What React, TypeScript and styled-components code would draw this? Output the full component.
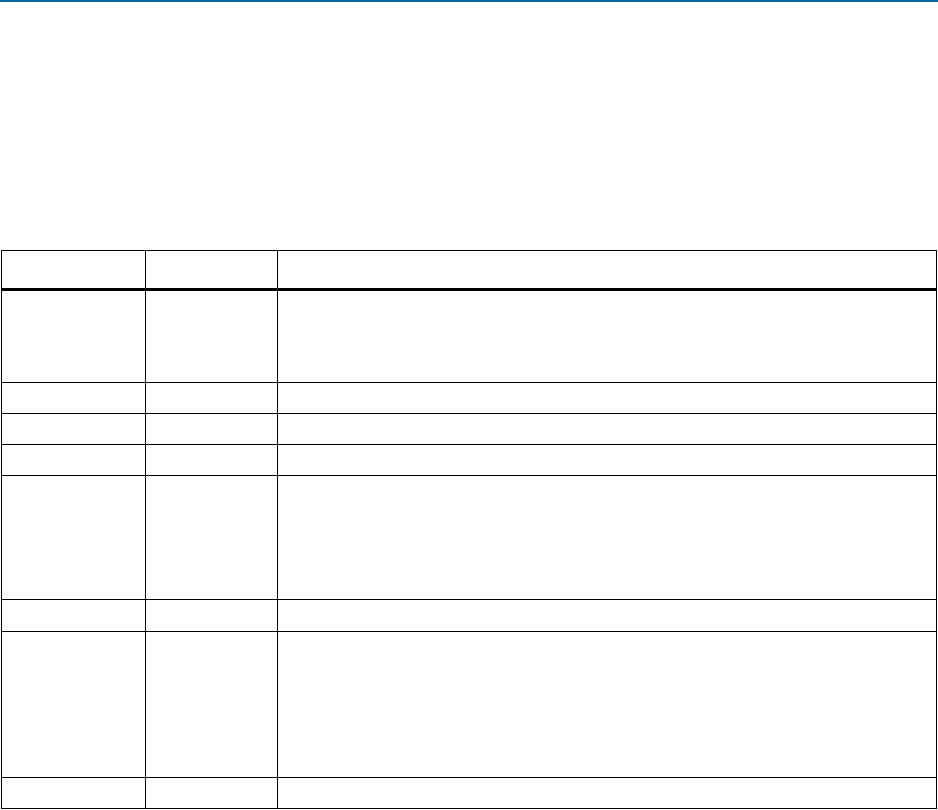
import React from 'react';
import styled, { createGlobalStyle } from 'styled-components';

const GlobalStyle = createGlobalStyle`
    html, body {
        margin: 0;
        padding: 0;
        background: #ffffff;
        font-family: "Liberation Sans", Arial, sans-serif;
        font-size: 13px;
        color: #000000;
    }
`;

const rowHeights = [92, 31, 31, 31, 124, 32, 146, 31];

const App = () => {
    return (
        <Page>
            <GlobalStyle />
            <TopRule />
            <TableArea>
                <Grid>
                    <thead>
                        <tr>
                            <HeadCell first width={145}></HeadCell>
                            <HeadCell width={132}></HeadCell>
                            <HeadCell width={659}></HeadCell>
                        </tr>
                    </thead>
                    <tbody>
                        {rowHeights.map((h, idx) => {
                            return (
                                <tr key={idx}>
                                    <Cell first height={h}></Cell>
                                    <Cell height={h}></Cell>
                                    <Cell height={h}></Cell>
                                </tr>
                            );
                        })}
                    </tbody>
                </Grid>
            </TableArea>
        </Page>
    );
}

const Page = styled.div`
    width: 938px;
    min-height: 810px;
    display: flex;
    flex-direction: column;
`;

const TopRule = styled.div`
    height: 2px;
    width: 100%;
    background-color: #05679b;
`;

const TableArea = styled.div`
    padding: 248px 0 0 1px;
`;

const Grid = styled.table`
    border-collapse: separate;
    border-spacing: 0;
    table-layout: fixed;
    width: 936px;
`;

const HeadCell = styled.th<{first?: boolean, width: number}>`
    box-sizing: border-box;
    width: ${props => props.width}px;
    height: 41px;
    padding: 0 6px;
    border-top: 1px solid #000;
    border-bottom: 3px solid #000;
    border-right: 1px solid #000;
    border-left: ${props => props.first ? "1px solid #000" : "none"};
    text-align: left;
    font-weight: bold;
`;

const Cell = styled.td<{first?: boolean, height: number}>`
    box-sizing: border-box;
    height: ${props => props.height}px;
    padding: 4px 6px;
    border-bottom: 1px solid #000;
    border-right: 1px solid #000;
    border-left: ${props => props.first ? "1px solid #000" : "none"};
    vertical-align: top;
`;

export default App;
